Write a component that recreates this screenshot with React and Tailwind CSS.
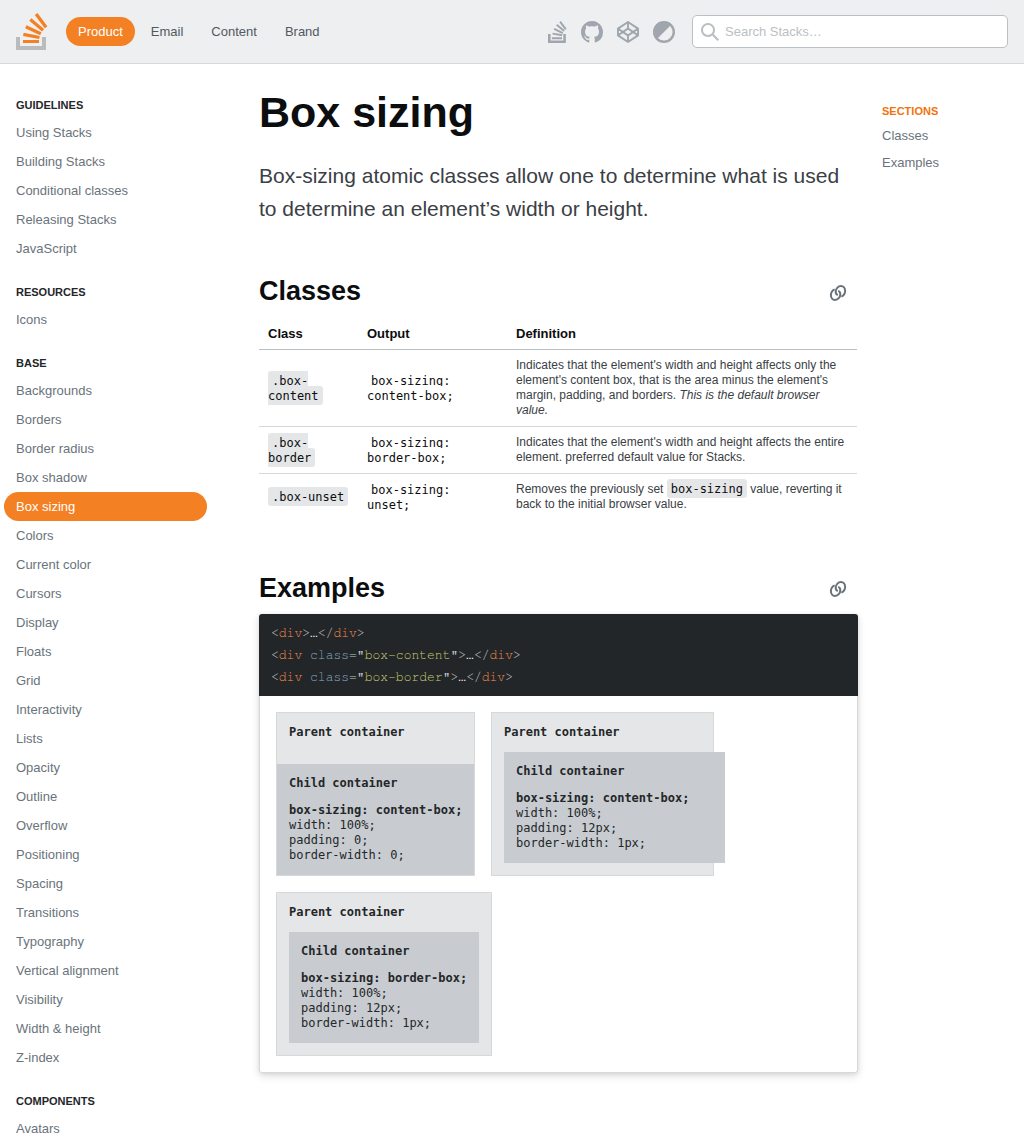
import React from "react";
import { FaCodepen } from "react-icons/fa";

const sections = [
  ["Guidelines", ["Using Stacks", "Building Stacks", "Conditional classes", "Releasing Stacks", "JavaScript"]],
  ["Resources", ["Icons"]],
  ["Base", ["Backgrounds", "Borders", "Border radius", "Box shadow", "Box sizing", "Colors", "Current color", "Cursors", "Display", "Floats", "Grid", "Interactivity", "Lists", "Opacity", "Outline", "Overflow", "Positioning", "Spacing", "Transitions", "Typography", "Vertical alignment", "Visibility", "Width & height", "Z-index"]],
  ["Components", ["Avatars"]],
];

const StacksLogo = () => (
  <svg className="ml-4 mb-px h-[37px] w-8" viewBox="0 0 32 37">
    <path d="M26 33v-9h4v13H0V24h4v9h22Z" fill="#BCBBBB" />
    <path d="m21.5 0-2.7 2 9.9 13.3 2.7-2L21.5 0ZM26 18.4 13.3 7.8l2.1-2.5 12.7 10.6-2.1 2.5ZM9.1 15.2l15 7 1.4-3-15-7-1.4 3Zm14 10.79.68-2.95-16.1-3.35L7 23l16.1 2.99ZM23 30H7v-3h16v3Z" fill="#F48024" />
  </svg>
);

const StacksGlyph = () => (
  <svg className="h-[22px] w-[19px]" viewBox="2 0.7 14.9 17.3" fill="currentColor">
    <path d="M14 16v-5h2v7H2v-7h2v5h10Z" />
    <path d="m12.09.71-1.21.9 4.5 6.07 1.22-.9L12.09.71ZM5 15h8v-1.5H5V15Zm9.15-5.87L8.35 4.3l.96-1.16 5.8 4.83-.96 1.16Zm-7.7-1.47 6.85 3.19.63-1.37-6.85-3.2-.63 1.38Zm6.53 5L5.4 11.39l.3-1.53 7.58 1.33-.3 1.47Z" />
  </svg>
);

const GithubMark = () => (
  <svg className="size-[22px]" viewBox="0 0 16 16" fill="currentColor">
    <path d="M8 0C3.58 0 0 3.58 0 8c0 3.54 2.29 6.53 5.47 7.59.4.07.55-.17.55-.38 0-.19-.01-.82-.01-1.49-2.01.37-2.53-.49-2.69-.94-.09-.23-.48-.94-.82-1.13-.28-.15-.68-.52-.01-.53.63-.01 1.08.58 1.23.82.72 1.21 1.87.87 2.33.66.07-.52.28-.87.51-1.07-1.78-.2-3.64-.89-3.64-3.95 0-.87.31-1.59.82-2.15-.08-.2-.36-1.02.08-2.12 0 0 .67-.21 2.2.82.64-.18 1.32-.27 2-.27s1.36.09 2 .27c1.53-1.04 2.2-.82 2.2-.82.44 1.1.16 1.92.08 2.12.51.56.82 1.27.82 2.15 0 3.07-1.87 3.75-3.65 3.95.29.25.54.73.54 1.48 0 1.07-.01 1.93-.01 2.2 0 .21.15.46.55.38A8.01 8.01 0 0 0 16 8c0-4.42-3.58-8-8-8z" />
  </svg>
);

const ContrastIcon = () => (
  <svg className="size-[22px]" viewBox="0 0 22 22">
    <circle cx="11" cy="11" r="9.8" fill="none" stroke="currentColor" strokeWidth="2.4" />
    <path d="M18.5 3.5A10.6 10.6 0 0 0 3.5 18.5Z" fill="currentColor" />
  </svg>
);

const SearchIcon = () => (
  <svg className="size-[18px]" viewBox="0 0 18 18" fill="#BBC0C4">
    <path d="m18 16.5-5.14-5.18h-.35a7 7 0 1 0-1.19 1.19v.35L16.5 18l1.5-1.5ZM12 7A5 5 0 1 1 2 7a5 5 0 0 1 10 0Z" />
  </svg>
);

const LinkIcon = () => (
  <svg className="size-[18px]" viewBox="0 0 18 18" fill="none" stroke="#6A737C" strokeWidth="2">
    <path d="M5.7 5.3C3.300 6.300 1.900 8.700 1.900 11.200c0 2.700 1.700 4.700 4.100 4.700 3 0 5.300-2.700 5.300-5.700 0-1.600-.8-2.800-2.100-3.300" />
    <path d="M12.300 12.700c2.400-1 3.800-3.400 3.800-5.900 0-2.700-1.700-4.700-4.100-4.700-3 0-5.300 2.700-5.300 5.700 0 1.600.8 2.800 2.100 3.300" />
  </svg>
);

const Heading = ({ children }) => (
  <div className="flex items-center justify-between pr-[11px]">
    <h2 className="text-[27px] leading-[36px] font-bold text-[#0c0d0e]">{children}</h2>
    <a className="mt-[3px]"><LinkIcon /></a>
  </div>
);

const mono = "font-['DejaVu_Sans_Mono',monospace] text-[12px]";

const Code = ({ children, plain }) => (
  <code className={`${mono} rounded-[3px] px-1 py-[2.5px] text-[#0c0d0e] ${plain ? "bg-white" : "bg-[#e4e6e8]"}`}>{children}</code>
);

const Row = ({ name, output, last, children }) => {
  const pad = last ? "py-2" : "pt-[9px] pb-[7px]";
  return (
    <tr className={last ? "" : "border-b border-[#d6d9dc]"}>
      <td className={`${pad} pr-2 pl-[9px] align-middle`}><Code>{name}</Code></td>
      <td className="pt-[9px] pr-2 pb-[7px] pl-[9px] align-middle"><Code plain>{output}</Code></td>
      <td className="py-2 pr-2 pl-[9px] align-middle">{children}</td>
    </tr>
  );
};

const Angle = ({ children }) => <span className="text-[#c0c4c8]">{children}</span>;
const Tag = ({ children }) => <span className="text-[#f88d4a]">{children}</span>;

const CodeLine = ({ value }) => (
  <div>
    <Angle>&lt;</Angle><Tag>div</Tag>
    {value && <> <span className="text-[#85aac8]">class</span><Angle>=</Angle><Angle>"</Angle><span className="text-[#c5cc6c]">{value}</span><Angle>"</Angle></>}
    <Angle>&gt;</Angle>…<Angle>&lt;/</Angle><Tag>div</Tag><Angle>&gt;</Angle>
  </div>
);

const ChildText = ({ sizing, padding, border }) => (
  <>
    <div className="mb-3 font-bold">Child container</div>
    <div className="font-bold">box-sizing: {sizing};</div>
    <div>width: 100%;</div>
    <div>padding: {padding};</div>
    <div>border-width: {border};</div>
  </>
);

export default function App() {
  return (
    <div className="h-[1145px] w-[1024px] overflow-hidden bg-white font-['Liberation_Sans',Arial,sans-serif] text-[13px] text-[#3b4045]">
      <header className="flex h-16 items-center border-b border-[#d6d9dc] bg-[#eeeff1] pr-4">
        <StacksLogo />
        <nav className="ml-[18px] flex gap-1 text-[#525960]">
          <a className="rounded-full bg-[#f48024] px-3 py-[6px] leading-[17px] text-white">Product</a>
          <a className="px-3 py-[6px] leading-[17px]">Email</a>
          <a className="px-3 py-[6px] leading-[17px]">Content</a>
          <a className="px-3 py-[6px] leading-[17px]">Brand</a>
        </nav>
        <div className="ml-auto flex items-center gap-[14px] text-[#9fa6ad]">
          <StacksGlyph />
          <GithubMark />
          <FaCodepen className="size-[22px]" />
          <ContrastIcon />
        </div>
        <div className="ml-[17px] flex h-[33px] w-[316px] items-center gap-[6px] rounded-[5px] border border-[#bbc0c4] bg-white pl-2 text-[#bbc0c4]">
          <SearchIcon />
          <span>Search Stacks…</span>
        </div>
      </header>

      <div className="flex">
        <aside className="w-[207px] shrink-0 pt-3 pl-1">
          {sections.map(([title, items]) => (
            <div key={title}>
              <div className="h-[42px] px-3 pt-[22px] text-[11px] leading-[14px] font-bold text-[#242729] uppercase">{title}</div>
              {items.map((item) => (
                <a key={item} className={`block rounded-full px-3 py-[6px] leading-[17px] ${item === "Box sizing" ? "bg-[#f48024] text-white" : "text-[#6a737c]"}`}>{item}</a>
              ))}
            </div>
          ))}
        </aside>

        <main className="ml-[52px] w-[599px] shrink-0 pt-[23px]">
          <h1 className="text-[43px] leading-[50px] font-bold text-[#0c0d0e]">Box sizing</h1>
          <p className="mt-[22px] text-[21px] leading-[33px]">Box-sizing atomic classes allow one to determine what is used to determine an element’s width or height.</p>

          <section className="mt-12">
            <Heading>Classes</Heading>
            <table className="mt-[9px] w-[598px] table-fixed border-collapse text-left text-[12px] leading-[15px]">
              <colgroup><col className="w-[99px]" /><col className="w-[149px]" /><col /></colgroup>
              <thead>
                <tr className="border-b border-[#bbc0c4] text-[13px] text-[#0c0d0e]">
                  {["Class", "Output", "Definition"].map((h) => (
                    <th key={h} className="h-[31px] pt-px pl-[9px] font-bold">{h}</th>
                  ))}
                </tr>
              </thead>
              <tbody>
                <Row name=".box-content" output="box-sizing: content-box;">
                  Indicates that the element's width and height affects only the element's content box, that is the area minus the element's margin, padding, and borders. <em>This is the default browser value.</em>
                </Row>
                <Row name=".box-border" output="box-sizing: border-box;">
                  Indicates that the element's width and height affects the entire element. preferred default value for Stacks.
                </Row>
                <Row name=".box-unset" output="box-sizing: unset;" last>
                  Removes the previously set <Code>box-sizing</Code> value, reverting it back to the initial browser value.
                </Row>
              </tbody>
            </table>
          </section>

          <section className="mt-[50px]">
            <Heading>Examples</Heading>
            <div className="mt-2 rounded-[3px] shadow-[0_1px_4px_rgba(0,0,0,0.09),0_3px_8px_rgba(0,0,0,0.09),0_4px_13px_rgba(0,0,0,0.03)]">
              <pre className="rounded-t-[3px] bg-[#232629] px-3 pt-[9px] pb-[7px] font-[FreeMono,'Liberation_Mono',monospace] text-[13px] leading-[22px] text-white">
                <CodeLine />
                <CodeLine value="box-content" />
                <CodeLine value="box-border" />
              </pre>
              <div className={`${mono} flex flex-wrap gap-4 rounded-b-[3px] border border-t-0 border-[#d6d9dc] p-4 leading-[15px] whitespace-nowrap text-[#242729]`}>
                <div className="w-[199px] border border-[#d6d9dc] bg-[#e4e6e8] pt-3">
                  <div className="mb-6 px-3 font-bold">Parent container</div>
                  <div className="bg-[#c8ccd0] p-3">
                    <ChildText sizing="content-box" padding="0" border="0" />
                  </div>
                </div>
                <div className="w-[223px] border border-[#d6d9dc] bg-[#e4e6e8] p-3">
                  <div className="mb-3 font-bold">Parent container</div>
                  <div className="box-content w-full bg-[#c8ccd0] p-3">
                    <ChildText sizing="content-box" padding="12px" border="1px" />
                  </div>
                </div>
                <div className="w-[216px] border border-[#d6d9dc] bg-[#e4e6e8] p-3">
                  <div className="mb-3 font-bold">Parent container</div>
                  <div className="w-full bg-[#c8ccd0] p-3">
                    <ChildText sizing="border-box" padding="12px" border="1px" />
                  </div>
                </div>
              </div>
            </div>
          </section>
        </main>

        <aside className="ml-[24px] pt-[39px] text-[#6a737c]">
          <div className="text-[11px] leading-[16px] font-bold text-[#f2720c] uppercase">Sections</div>
          <a className="mt-[8px] block leading-[17px]">Classes</a>
          <a className="mt-[10px] block leading-[17px]">Examples</a>
        </aside>
      </div>
    </div>
  );
}
